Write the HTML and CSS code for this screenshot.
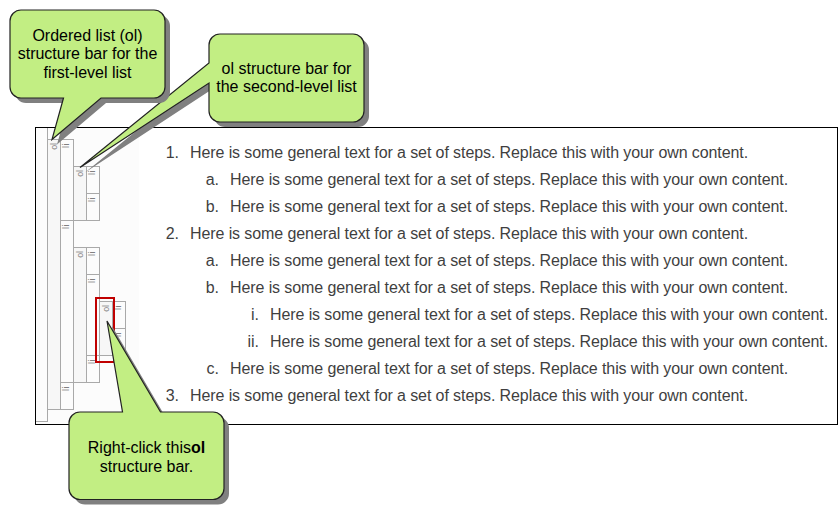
FILE: index.html
```html
<!DOCTYPE html>
<html lang="en">
<head>
<meta charset="utf-8">
<title>Structure bars</title>
<link rel="stylesheet" href="styles.css">
</head>
<body>
<main class="editor">
  <div class="gutter">
    <div class="body-bar"></div>
    <div class="tree">
      <div class="group">
        <div class="bar ol"><span>ol</span></div>
        <div class="items">
          <div class="row"><div class="bar"><span>li</span></div>
            <div class="group nested">
              <div class="bar ol"><span>ol</span></div>
              <div class="items">
                <div class="row"><div class="bar"><span>li</span></div></div>
                <div class="row"><div class="bar"><span>li</span></div></div>
              </div>
            </div>
          </div>
          <div class="row"><div class="bar"><span>li</span></div>
            <div class="group nested">
              <div class="bar ol"><span>ol</span></div>
              <div class="items">
                <div class="row"><div class="bar"><span>li</span></div></div>
                <div class="row"><div class="bar"><span>li</span></div>
                  <div class="group nested">
                    <div class="bar ol"><span>ol</span></div>
                    <div class="items">
                      <div class="row"><div class="bar"><span>li</span></div></div>
                      <div class="row"><div class="bar"><span>li</span></div></div>
                    </div>
                  </div>
                </div>
                <div class="row"><div class="bar"><span>li</span></div></div>
              </div>
            </div>
          </div>
          <div class="row"><div class="bar"><span>li</span></div></div>
        </div>
      </div>
    </div>
  </div>
  <div class="content">
    <div class="step"><span class="num">1.</span><span class="text">Here is some general text for a set of steps. Replace this with your own content.</span></div>
    <div class="step second"><span class="num">a.</span><span class="text">Here is some general text for a set of steps. Replace this with your own content.</span></div>
    <div class="step second"><span class="num">b.</span><span class="text">Here is some general text for a set of steps. Replace this with your own content.</span></div>
    <div class="step"><span class="num">2.</span><span class="text">Here is some general text for a set of steps. Replace this with your own content.</span></div>
    <div class="step second"><span class="num">a.</span><span class="text">Here is some general text for a set of steps. Replace this with your own content.</span></div>
    <div class="step second"><span class="num">b.</span><span class="text">Here is some general text for a set of steps. Replace this with your own content.</span></div>
    <div class="step third"><span class="num">i.</span><span class="text">Here is some general text for a set of steps. Replace this with your own content.</span></div>
    <div class="step third"><span class="num">ii.</span><span class="text">Here is some general text for a set of steps. Replace this with your own content.</span></div>
    <div class="step second"><span class="num">c.</span><span class="text">Here is some general text for a set of steps. Replace this with your own content.</span></div>
    <div class="step"><span class="num">3.</span><span class="text">Here is some general text for a set of steps. Replace this with your own content.</span></div>
  </div>
</main>
<div class="highlight"></div>
<svg class="shapes" width="838" height="515" viewBox="0 0 838 515" aria-hidden="true">
  <defs>
    <path id="c2" d="M220.500 34.500H353.500a11 11 0 0 1 11 11V111.500a11 11 0 0 1-11 11H220.500a11 11 0 0 1-11-11V83.500L80.500 168 209.500 63.500V45.500a11 11 0 0 1 11-11Z"/>
    <path id="c1" d="M21.500 10.500H154.500a11 11 0 0 1 11 11V87.500a11 11 0 0 1-11 11H101.500L52.500 140 64 98.500H21.500a11 11 0 0 1-11-11V21.500a11 11 0 0 1 11-11Z"/>
    <path id="c3" d="M80.500 412.500H123L107.500 321.500 161 412.500H213.500a11 11 0 0 1 11 11V489a11 11 0 0 1-11 11H80.500a11 11 0 0 1-11-11V423.500a11 11 0 0 1 11-11Z"/>
  </defs>
  <g class="bubbles">
    <use href="#c2" class="shadow"/><use href="#c2" class="shape"/>
    <use href="#c1" class="shadow"/><use href="#c1" class="shape"/>
    <use href="#c3" class="shadow"/><use href="#c3" class="shape"/>
  </g>
</svg>
<div class="callout first"><span>Ordered list (ol)</span><span>structure bar for the</span><span class="last">first-level list</span></div>
<div class="callout second-level"><span>ol structure bar for</span><span>the second-level list</span></div>
<div class="callout third-level"><span>Right-click this<b>ol</b></span><span class="last">structure bar.</span></div>
</body>
</html>
```
FILE: styles.css
```css
* { box-sizing: border-box; }
body {
  margin: 0;
  width: 838px;
  height: 515px;
  padding-top: 127px;
  overflow: hidden;
  background: #fff;
  font: 16px/18px "Liberation Sans", Arial, sans-serif;
}
.editor {
  display: flex;
  width: 803px;
  height: 298px;
  margin-left: 35px;
  border: 1px solid #000;
}
.gutter { display: flex; width: 103px; background: #fcfcfc; }
.body-bar {
  width: 12px;
  height: 294px;
  margin-right: -1px;
  border: solid #a9a9a9;
  border-width: 0 1px 1px 0;
}
.tree { padding-top: 11px; }
.group { display: flex; }
.nested { margin-top: 27px; }
.items { display: flex; flex-direction: column; }
.row { display: flex; }
.row + .row { margin-top: -1px; }
.bar {
  width: 14px;
  min-height: 28px;
  margin-right: -1px;
  border: 1px solid #a9a9a9;
  background: #fcfcfc;
}
.bar.ol { background: #f7f7f7; }
.bar span {
  display: block;
  width: 12px;
  height: 12px;
  color: #808080;
  font-size: 9px;
  letter-spacing: 0.5px;
  line-height: 10px;
  text-align: center;
  transform: translate(-0.5px, -0.5px) rotate(-90deg);
}
.bar.ol span { letter-spacing: -0.3px; transform: translate(0.5px, 0.5px) rotate(-90deg); }
.content { padding: 11px 0 0 11px; color: #3f3f3f; }
.step { display: flex; height: 27px; line-height: 27px; white-space: nowrap; }
.num { width: 29px; margin-right: 11px; text-align: right; }
.text { letter-spacing: -0.094px; }
.second { padding-left: 40px; }
.third { padding-left: 80px; }
.highlight {
  position: absolute;
  left: 95px;
  top: 297px;
  width: 20px;
  height: 66px;
  border: 2px solid #c00000;
}
.shapes { position: absolute; left: 0; top: 0; }
.bubbles { transform: translate(-0.5px, -0.5px); }
.shadow { fill: #808080; transform: translate(5px, 5px); }
.shape { fill: #c2ee83; stroke: #222; stroke-width: 1.2; }
.callout {
  position: absolute;
  display: flex;
  flex-direction: column;
  justify-content: center;
  align-items: center;
  width: 155px;
  height: 88px;
  color: #000;
  letter-spacing: 0;
  white-space: nowrap;
}
.last { padding-top: 1px; }
.first { left: 10px; top: 10px; }
.second-level { left: 209px; top: 34px; }
.third-level { left: 69px; top: 413px; }
```
